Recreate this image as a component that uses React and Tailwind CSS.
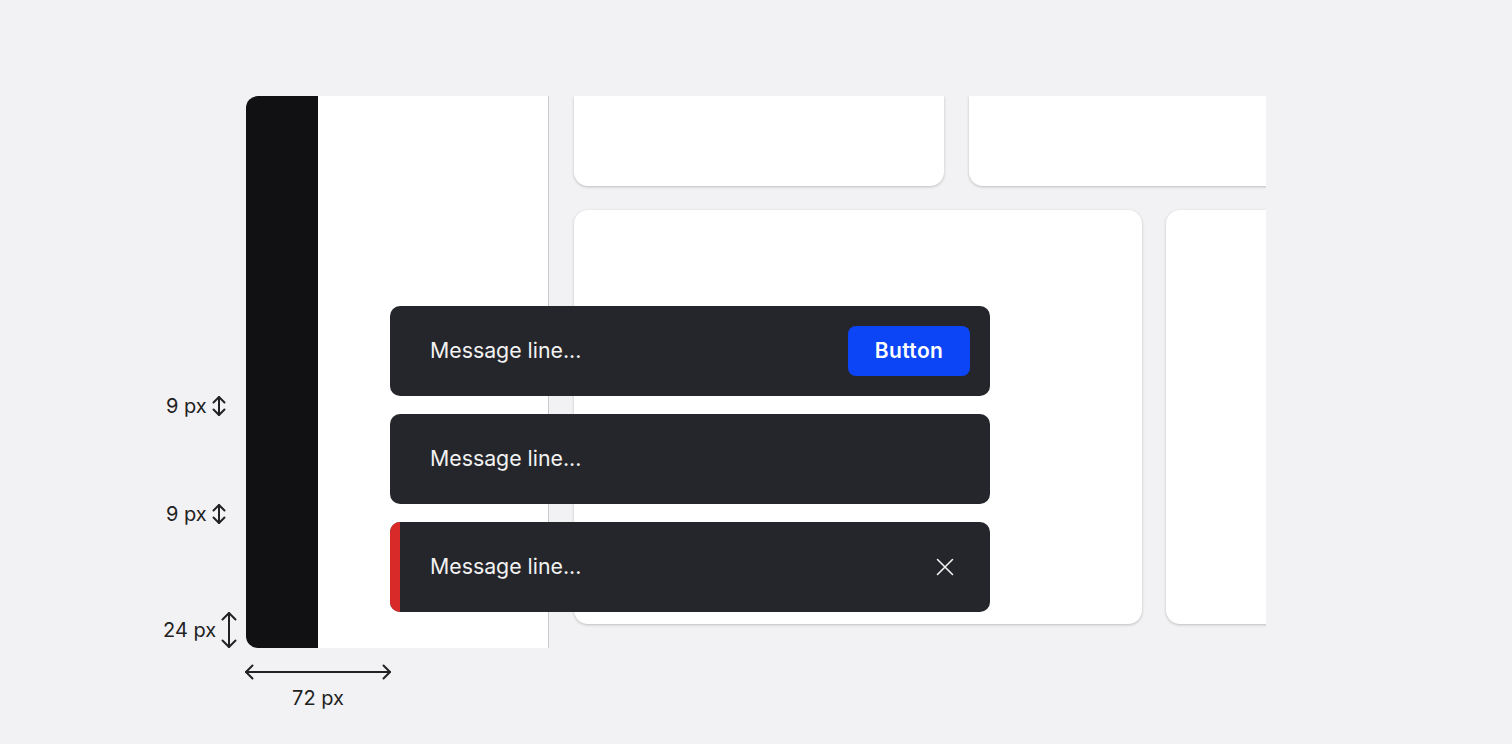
const font = { fontFamily: 'Inter, "Noto Sans", sans-serif' };

// small double-headed vertical arrow used for the "9 px" labels
const SmallVArrow = () => (
  <svg width="18" height="22" viewBox="0 0 18 22" fill="none" stroke="#222" strokeWidth="2" strokeLinecap="round" strokeLinejoin="round">
    <path d="M9 2v18" />
    <path d="M3.5 7.5L9 2l5.5 5.5" />
    <path d="M3.5 14.5L9 20l5.5-5.5" />
  </svg>
);

const Toast = ({ accent, action, close }) => (
  <div className="relative flex h-[90px] w-[600px] items-center overflow-hidden rounded-[10px] bg-[#25262b] pl-10 pr-5">
    {accent && <div className="absolute left-0 top-0 h-full w-[10px] bg-[#d92a2a]" />}
    <span className="flex-1 text-[21.3px] text-[#f2f2f2]">Message line...</span>
    {action && (
      <button className="h-[50px] w-[122px] rounded-[8px] bg-[#0b45f5] text-[21px] font-semibold tracking-[0.4px] text-white">
        Button
      </button>
    )}
    {close && (
      <svg className="mr-[16px]" width="18" height="18" viewBox="0 0 18 18" stroke="#f2f2f2" strokeWidth="1.6" strokeLinecap="round">
        <path d="M1.5 1.5l15 15M16.5 1.5l-15 15" />
      </svg>
    )}
  </div>
);

const App = () => {
  return (
    <div className="relative h-[744px] w-full overflow-hidden bg-[#f2f2f4]" style={font}>
      {/* frame */}
      <div className="absolute left-[246px] top-[96px] flex h-[552px] w-[1020px] overflow-hidden rounded-l-[12px]">
        <div className="w-[72px] shrink-0 bg-[#111113]" />
        <div className="w-[231px] shrink-0 border-r border-[#c9c9cb] bg-white" />
        <div className="flex flex-1 flex-col gap-6 overflow-hidden pl-[25px]">
          <div className="flex gap-[25px]">
            <div className="h-[90px] w-[370px] shrink-0 rounded-b-[14px] bg-white shadow-[0_1px_3px_rgba(0,0,0,0.22)]" />
            <div className="h-[90px] w-[370px] shrink-0 rounded-b-[14px] bg-white shadow-[0_1px_3px_rgba(0,0,0,0.22)]" />
          </div>
          <div className="flex gap-6">
            <div className="h-[414px] w-[568px] shrink-0 rounded-[14px] bg-white shadow-[0_1px_3px_rgba(0,0,0,0.22)]" />
            <div className="h-[414px] w-[400px] shrink-0 rounded-[14px] bg-white shadow-[0_1px_3px_rgba(0,0,0,0.22)]" />
          </div>
        </div>
      </div>

      {/* toasts */}
      <div className="absolute left-[390px] top-[306px] flex flex-col gap-[18px]">
        <Toast action />
        <Toast />
        <Toast accent close />
      </div>

      {/* annotations */}
      <div className="absolute left-[166px] top-[391px] flex items-center gap-[3px] text-[20px] text-[#222]">
        <span>9 px</span>
        <SmallVArrow />
      </div>
      <div className="absolute left-[166px] top-[499px] flex items-center gap-[3px] text-[20px] text-[#222]">
        <span>9 px</span>
        <SmallVArrow />
      </div>
      <div className="absolute left-[163px] top-[611px] flex items-center gap-[4px] text-[20px] text-[#222]">
        <span>24 px</span>
        <svg width="18" height="38" viewBox="0 0 18 38" fill="none" stroke="#222" strokeWidth="2" strokeLinecap="round" strokeLinejoin="round">
          <path d="M9 2v34" />
          <path d="M2.5 8.5L9 2l6.5 6.5" />
          <path d="M2.5 29.5L9 36l6.5-6.5" />
        </svg>
      </div>
      <div className="absolute left-[243px] top-[662px] flex w-[150px] flex-col items-center">
        <svg width="150" height="20" viewBox="0 0 150 20" fill="none" stroke="#222" strokeWidth="2" strokeLinecap="round" strokeLinejoin="round">
          <path d="M3 10h144" />
          <path d="M9.5 3.5L3 10l6.5 6.5" />
          <path d="M140.5 3.5L147 10l-6.5 6.5" />
        </svg>
        <span className="mt-[1px] text-[20px] text-[#222]">72 px</span>
      </div>
    </div>
  );
};

export default App;
